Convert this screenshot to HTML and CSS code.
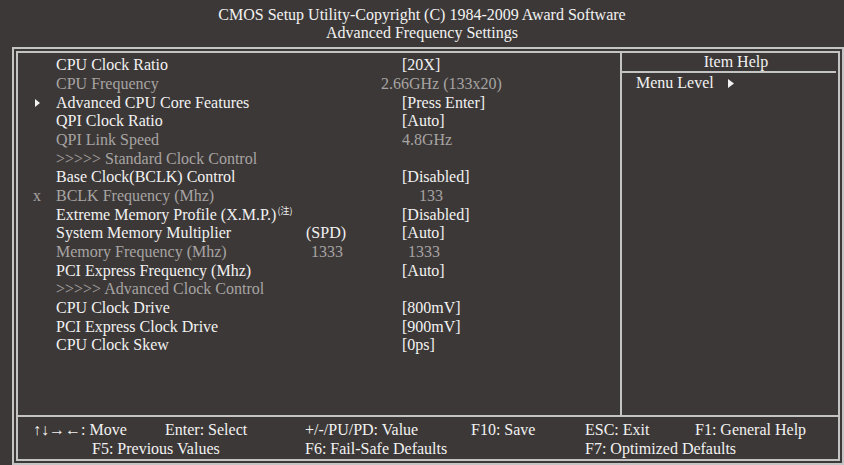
FILE: index.html
```html
<!DOCTYPE html>
<html>
<head>
<meta charset="utf-8">
<link rel="stylesheet" href="styles.css">
</head>
<body>
<div class="screen">
  <header class="title">
    <div>CMOS Setup Utility-Copyright (C) 1984-2009 Award Software</div>
    <div>Advanced Frequency Settings</div>
  </header>
  <div class="frame">
    <div class="inner">
      <div class="top">
        <div class="main">
          <div class="row"><span class="mk"></span><span class="lbl">CPU Clock Ratio</span><span class="mid"></span><span class="val">[20X]</span></div>
          <div class="row dim"><span class="mk"></span><span class="lbl">CPU Frequency</span><span class="mid"></span><span class="val shift-l">2.66GHz (133x20)</span></div>
          <div class="row"><span class="mk"><svg class="tri" viewBox="0 0 5 8"><polygon points="0,0 5,4 0,8" fill="#f2f2f2"/></svg></span><span class="lbl">Advanced CPU Core Features</span><span class="mid"></span><span class="val">[Press Enter]</span></div>
          <div class="row"><span class="mk"></span><span class="lbl">QPI Clock Ratio</span><span class="mid"></span><span class="val">[Auto]</span></div>
          <div class="row dim"><span class="mk"></span><span class="lbl">QPI Link Speed</span><span class="mid"></span><span class="val">4.8GHz</span></div>
          <div class="row dim"><span class="mk"></span><span class="lbl">&gt;&gt;&gt;&gt;&gt; Standard Clock Control</span><span class="mid"></span><span class="val"></span></div>
          <div class="row"><span class="mk"></span><span class="lbl">Base Clock(BCLK) Control</span><span class="mid"></span><span class="val">[Disabled]</span></div>
          <div class="row dim"><span class="mk x">x</span><span class="lbl">BCLK Frequency (Mhz)</span><span class="mid"></span><span class="val pad-133">133</span></div>
          <div class="row"><span class="mk"></span><span class="lbl">Extreme Memory Profile (X.M.P.)<span class="note">(注)</span></span><span class="mid"></span><span class="val">[Disabled]</span></div>
          <div class="row"><span class="mk"></span><span class="lbl">System Memory Multiplier</span><span class="mid">(SPD)</span><span class="val">[Auto]</span></div>
          <div class="row dim"><span class="mk"></span><span class="lbl">Memory Frequency (Mhz)</span><span class="mid pad-mid">1333</span><span class="val pad-1333">1333</span></div>
          <div class="row"><span class="mk"></span><span class="lbl">PCI Express Frequency (Mhz)</span><span class="mid"></span><span class="val">[Auto]</span></div>
          <div class="row dim"><span class="mk"></span><span class="lbl">&gt;&gt;&gt;&gt;&gt; Advanced Clock Control</span><span class="mid"></span><span class="val"></span></div>
          <div class="row"><span class="mk"></span><span class="lbl">CPU Clock Drive</span><span class="mid"></span><span class="val">[800mV]</span></div>
          <div class="row"><span class="mk"></span><span class="lbl">PCI Express Clock Drive</span><span class="mid"></span><span class="val">[900mV]</span></div>
          <div class="row"><span class="mk"></span><span class="lbl">CPU Clock Skew</span><span class="mid"></span><span class="val">[0ps]</span></div>
        </div>
        <aside class="help">
          <div class="help-head">Item Help</div>
          <div class="help-line">Menu Level<svg class="tri tri-help" viewBox="0 0 6 9"><polygon points="0,0 6,4.5 0,9" fill="#f2f2f2"/></svg></div>
        </aside>
      </div>
      <footer class="keys">
        <span class="k c1">↑↓→←: Move</span>
        <span class="k c3">Enter: Select</span>
        <span class="k c4">+/-/PU/PD: Value</span>
        <span class="k c5">F10: Save</span>
        <span class="k c6">ESC: Exit</span>
        <span class="k c7">F1: General Help</span>
        <span class="k c2 r2">F5: Previous Values</span>
        <span class="k c4 r2">F6: Fail-Safe Defaults</span>
        <span class="k c6 r2">F7: Optimized Defaults</span>
      </footer>
    </div>
  </div>
</div>
</body>
</html>
```

FILE: styles.css
```css
html, body {
  margin: 0;
  padding: 0;
  background: #3c3837;
}
body {
  width: 844px;
  height: 465px;
  overflow: hidden;
  font-family: "Liberation Serif", "Times New Roman", serif;
  font-size: 16px;
  font-weight: 400;
  color: #f2f2f2;
}
.screen {
  width: 844px;
  height: 465px;
  background: #3c3837;
}
.title {
  height: 47px;
  box-sizing: border-box;
  padding-top: 6px;
  text-align: center;
  line-height: 18px;
}
.frame {
  margin-left: 12px;
  width: 832px;
  height: 418px;
  box-sizing: border-box;
  border: 2px solid #c4c4c4;
  padding: 2px;
}
.inner {
  height: 100%;
  box-sizing: border-box;
  border: 2px solid #c4c4c4;
  display: flex;
  flex-direction: column;
}
.top {
  height: 362px;
  display: flex;
}
.main {
  width: 602px;
  padding-top: 2px;
}
.row {
  display: grid;
  grid-template-columns: 38px 250px 96px 1fr;
  height: 19px;
  line-height: 19px;
  white-space: nowrap;
}
.row:nth-child(3n) {
  height: 18px;
}
.row.dim {
  color: #a7a4a3;
}
.mk {
  display: flex;
  align-items: center;
  padding-left: 17px;
}
.mk.x {
  padding-left: 15px;
}
.tri {
  width: 5px;
  height: 8px;
  display: block;
}
.shift-l {
  margin-left: -21px;
}
.pad-133 {
  padding-left: 17px;
}
.pad-1333 {
  padding-left: 6px;
}
.pad-mid {
  padding-left: 5px;
}
.note {
  font-family: "Noto Sans CJK SC", "Noto Sans CJK JP", sans-serif;
  font-size: 9px;
  line-height: 9px;
  display: inline-block;
  vertical-align: top;
  margin-top: 1px;
  margin-left: 1px;
}
.help {
  flex: 1;
  border-left: 2px solid #c4c4c4;
}
.help-head {
  text-align: center;
  padding-left: 14px;
  line-height: 18px;
  border-bottom: 2px solid #c4c4c4;
  margin-right: 2px;
}
.help-line {
  display: flex;
  align-items: center;
  padding-left: 14px;
  line-height: 18px;
  padding-top: 1px;
}
.tri-help {
  width: 6px;
  height: 9px;
  margin-left: 14px;
}
.keys {
  flex: 1;
  border-top: 2px solid #c4c4c4;
  display: grid;
  grid-template-columns: 15px 59px 73px 140px 166px 114px 110px 1fr;
  grid-template-rows: 19px 19px;
  padding-top: 3px;
  line-height: 19px;
  white-space: nowrap;
}
.k { grid-row: 1; }
.k.r2 { grid-row: 2; }
.c1 { grid-column: 2; }
.c2 { grid-column: 3; }
.c3 { grid-column: 4; }
.c4 { grid-column: 5; }
.c5 { grid-column: 6; }
.c6 { grid-column: 7; }
.c7 { grid-column: 8; }
```
